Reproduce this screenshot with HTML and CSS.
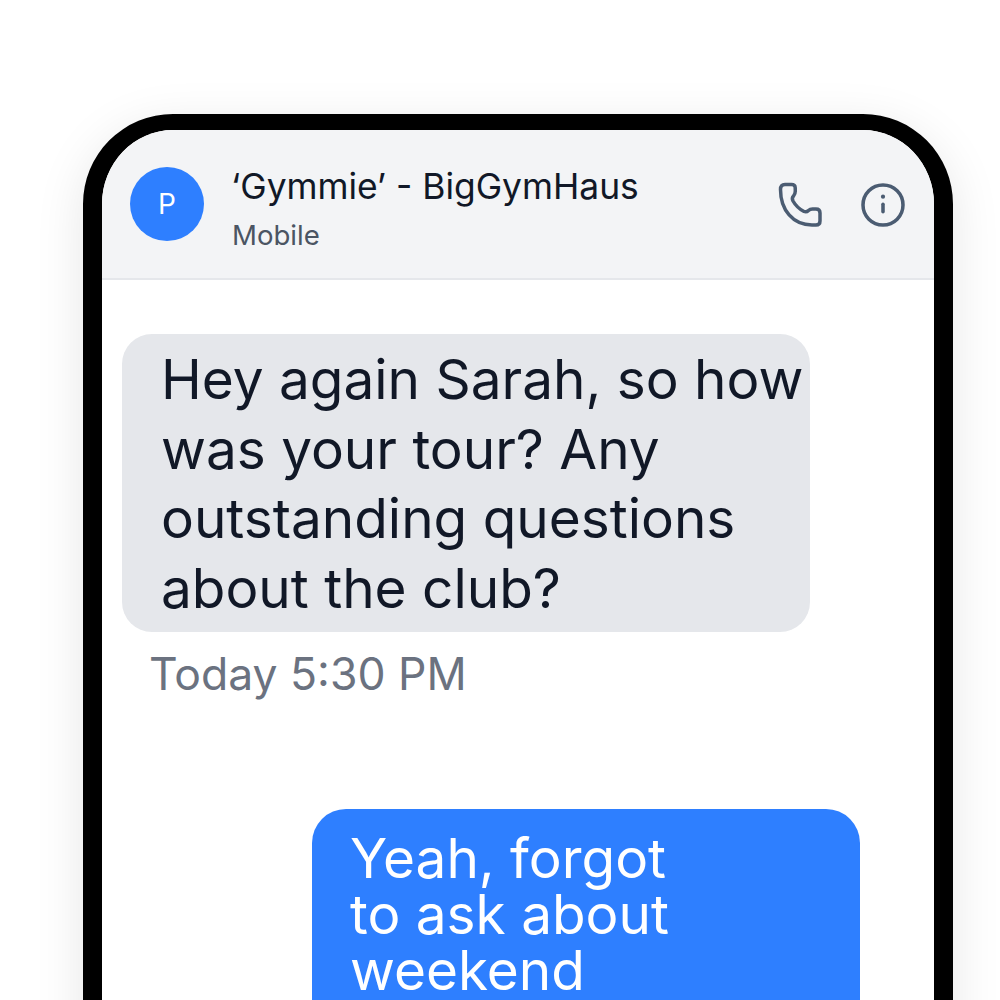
FILE: index.html
```html
<!DOCTYPE html>
<html lang="en">
<head>
    <meta charset="UTF-8">
    <meta name="viewport" content="width=device-width, initial-scale=1.0">
    <title>Messages</title>
    <link rel="stylesheet" href="styles.css">
</head>
<body>
    <div class="phone">
        <div class="header">
            <div class="avatar">P</div>
            <div class="contact">
                <div class="contact-name">‘Gymmie’ - BigGymHaus</div>
                <div class="contact-type">Mobile</div>
            </div>
            <div class="actions">
                <svg class="icon" viewBox="0 0 50 50" fill="none" stroke="currentColor" stroke-width="3.5" stroke-linecap="round" stroke-linejoin="round">
                    <path d="M5.5 9.5Q5.5 4.5 10 4.5H16.5Q20 4.5 20.2 7.5L20.3 11Q20.3 14 18.5 16Q16.5 18 18 21Q22 28 29 31.5Q31.5 32.5 33.5 30.5Q35 29 37.5 29H41Q45 29 45 33V41Q45 45 41 45H37C18 45 5.5 30 5.5 9.5Z"/>
                </svg>
                <svg class="icon" viewBox="0 0 24 24" fill="none" stroke="currentColor" stroke-width="1.7" stroke-linecap="round" stroke-linejoin="round">
                    <circle cx="12" cy="12" r="9.6"/>
                    <path d="M12 11.6v3.6"/>
                    <circle cx="12" cy="8" r="1" fill="currentColor" stroke="none"/>
                </svg>
            </div>
        </div>
        <div class="thread">
            <div class="bubble bubble-in">Hey again Sarah, so how was your tour? Any outstanding questions about the club?</div>
            <div class="timestamp">Today 5:30 PM</div>
            <div class="bubble bubble-out">Yeah, forgot<br>to ask about<br>weekend</div>
        </div>
    </div>
</body>
</html>
```

FILE: styles.css
```css
html, body {
    height: 100%;
}
body {
    margin: 0;
    height: 1000px;
    overflow: hidden;
    background-color: white;
    font-family: Inter, "Liberation Sans", sans-serif;
    padding: 114px 47px 0 83px;
    box-sizing: border-box;
}
.phone {
    height: 1100px;
    background-color: white;
    border: solid black;
    border-width: 16px 19px;
    border-radius: 90px;
    box-shadow: 0 12px 50px rgba(0, 0, 0, 0.1);
    overflow: hidden;
}
.header {
    display: flex;
    align-items: flex-start;
    height: 148px;
    padding-left: 28px;
    padding-right: 26px;
    background-color: #f3f4f6;
    border-bottom: 2px solid #e5e7eb;
}
.avatar {
    display: flex;
    align-items: center;
    justify-content: center;
    flex-shrink: 0;
    width: 74px;
    height: 74px;
    margin-top: 37px;
    border-radius: 50%;
    background-color: #2e7fff;
    color: white;
    font-size: 28px;
}
.contact {
    flex: 1;
    margin-left: 27px;
    padding-top: 35px;
}
.contact-name {
    font-size: 35.4px;
    line-height: 44px;
    color: #111827;
}
.contact-type {
    margin: 8px 0 0 1px;
    font-size: 27.6px;
    line-height: 36px;
    color: #4b5563;
}
.actions {
    display: flex;
    gap: 33px;
    margin-top: 50px;
}
.icon {
    width: 50px;
    height: 50px;
    color: #4b5c72;
}
.thread {
    display: flex;
    flex-direction: column;
    padding: 54px 0 0 20px;
}
.bubble {
    box-sizing: border-box;
    border-radius: 30px;
    font-size: 54.9px;
}
.bubble-in {
    width: 688px;
    padding: 11px 0 9px 39px;
    line-height: 69.6px;
    background-color: #e5e7eb;
    color: #111827;
}
.timestamp {
    margin: 17px 0 0 27px;
    font-size: 44.5px;
    line-height: 50px;
    color: #6b7280;
}
.bubble-out {
    width: 548px;
    margin: 110px 0 0 190px;
    padding: 22px 0 60px 38px;
    border-radius: 34px;
    line-height: 55.7px;
    background-color: #2e7fff;
    color: white;
}
```
